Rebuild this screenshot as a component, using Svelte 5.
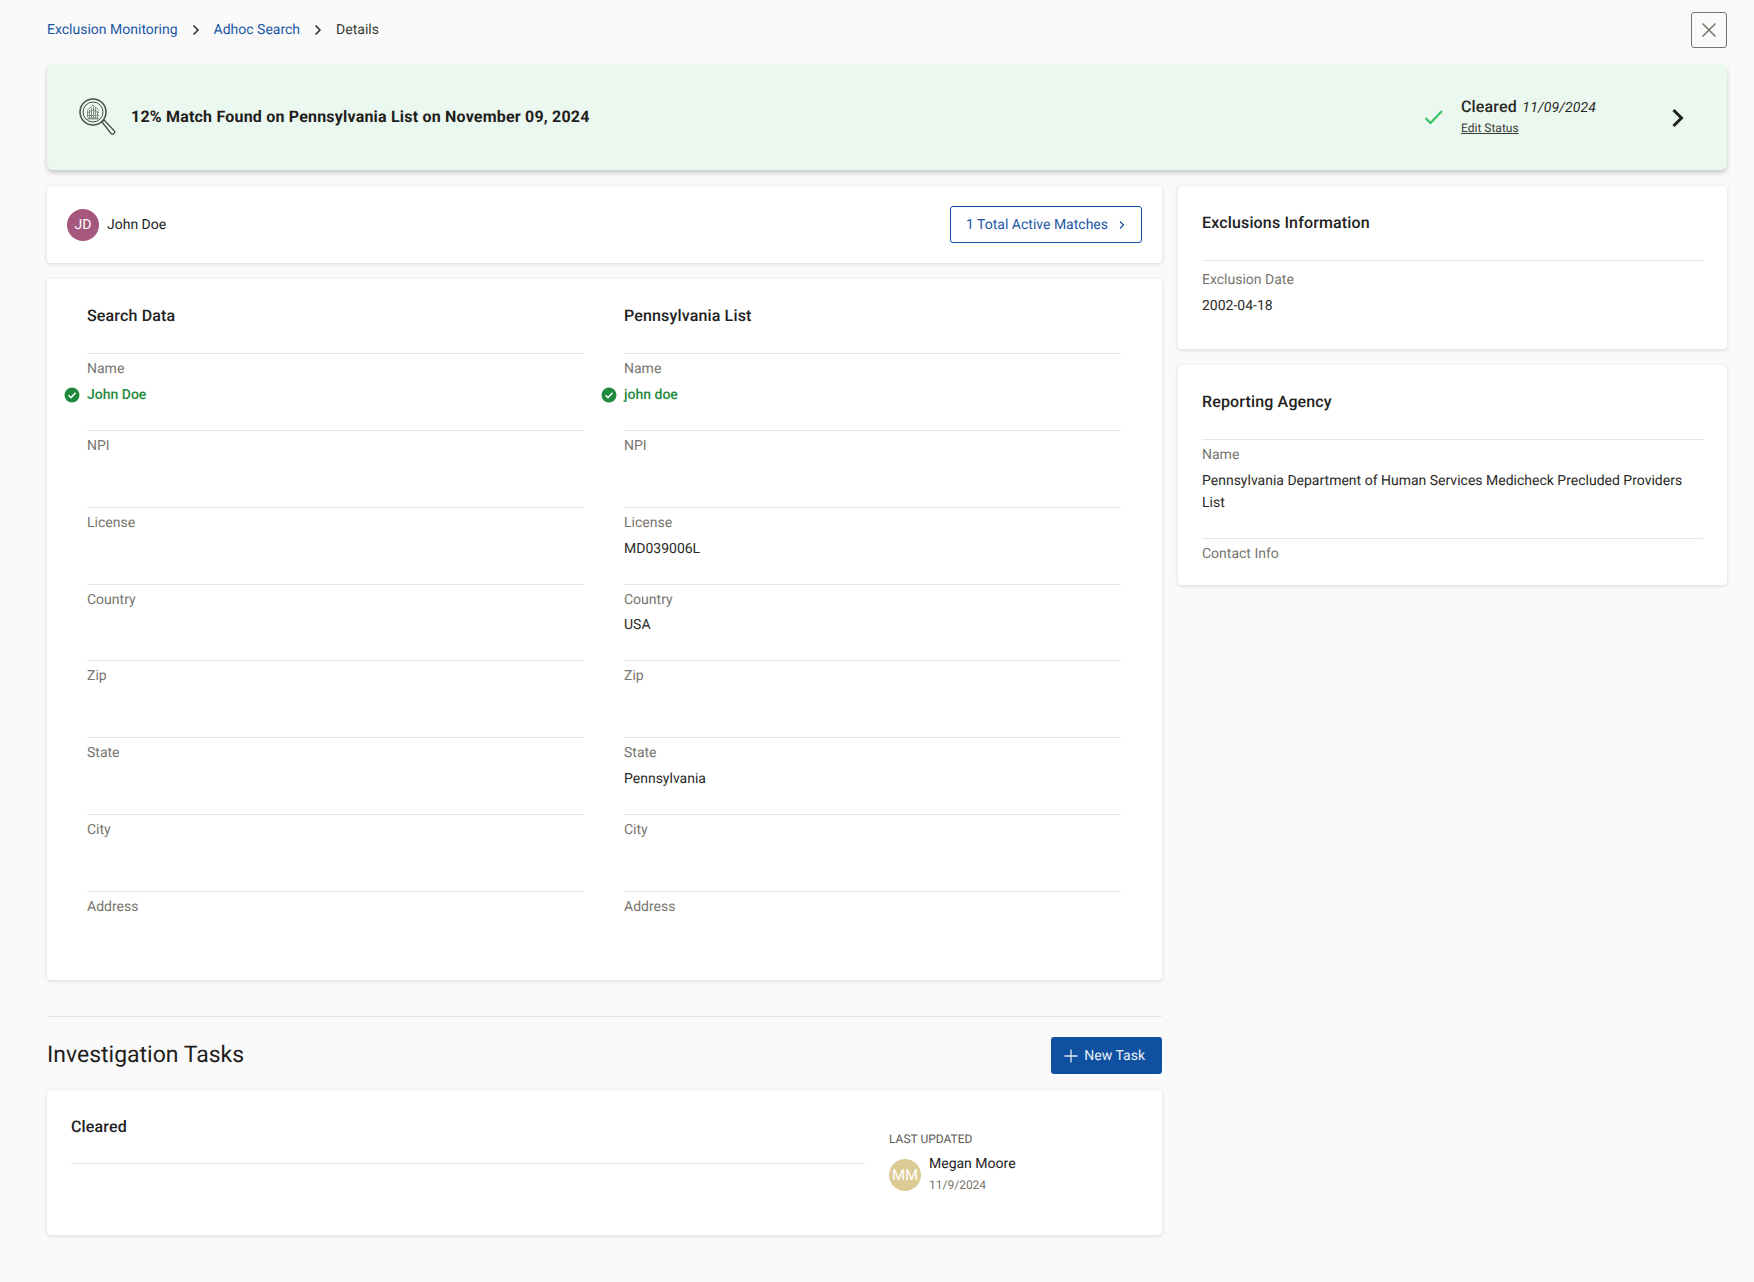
<script>
  const fields = [
    ['Name', 'John Doe', 'john doe', true],
    ['NPI', '', ''],
    ['License', '', 'MD039006L'],
    ['Country', '', 'USA'],
    ['Zip', '', ''],
    ['State', '', 'Pennsylvania'],
    ['City', '', ''],
    ['Address', '', '']
  ];
  const cols = [
    { title: 'Search Data', idx: 1 },
    { title: 'Pennsylvania List', idx: 2 }
  ];
</script>

<div class="page">
  <header class="top">
    <nav class="crumbs">
      <span class="link">Exclusion Monitoring</span>
      <svg class="sep" viewBox="0 0 10 12" width="10" height="12"><path d="M2.5 1.5 7 6l-4.5 4.5" fill="none" stroke="#2b2b28" stroke-width="1.5"/></svg>
      <span class="link">Adhoc Search</span>
      <svg class="sep" viewBox="0 0 10 12" width="10" height="12"><path d="M2.5 1.5 7 6l-4.5 4.5" fill="none" stroke="#2b2b28" stroke-width="1.5"/></svg>
      <span class="cur">Details</span>
    </nav>
    <button class="close" aria-label="Close">
      <svg viewBox="0 0 16 16" width="16" height="16"><path d="M1.5 1.5l13 13M14.5 1.5l-13 13" stroke="#77756d" stroke-width="1.5" fill="none"/></svg>
    </button>
  </header>

  <section class="banner">
    <svg class="seal" viewBox="0 0 38 38" width="38" height="38" fill="none" stroke="#4b4d4a">
      <circle cx="15" cy="14" r="13" stroke-width="1.5"/>
      <circle cx="15" cy="14" r="10" stroke-width="1"/>
      <path d="M9.500 19v-6M11.500 20v-8M13.500 20v-10M15.500 20V9M17.500 20v-10M19.500 20v-7M9 12.500l6-5.500 6 5.500M9 15l6-3 6 3M9 17.500h12" stroke-width="1" stroke="#808b86"/>
      <path d="M9.500 20.500h11" stroke-width="1.800" stroke="#808b86"/>
      <path d="M24 24l2-2 10 10.500a1.500 1.500 0 0 1-3 3z" stroke-width="1.300"/>
    </svg>
    <h1>12% Match Found on Pennsylvania List on November 09, 2024</h1>
    <svg class="tick" viewBox="0 0 20 16" width="20" height="16"><path d="M1.500 9 6.500 14 18 2" fill="none" stroke="#30c060" stroke-width="2"/></svg>
    <div class="status">
      <div class="status-line"><strong>Cleared</strong> <em>11/09/2024</em></div>
      <span class="edit">Edit Status</span>
    </div>
    <svg class="chev" viewBox="0 0 14 20" width="14" height="20"><path d="M2.500 2 10.500 10 2.500 18" fill="none" stroke="#1f201c" stroke-width="3"/></svg>
  </section>

  <div class="grid">
    <div class="main">
      <section class="card person">
        <span class="avatar jd">JD</span>
        <span class="pname">John Doe</span>
        <button class="outline">1 Total Active Matches
          <svg viewBox="0 0 8 10" width="8" height="10"><path d="M2 1.500 5.500 5 2 8.500" fill="none" stroke="#0f50a0" stroke-width="1.100"/></svg>
        </button>
      </section>

      <section class="card compare">
        {#each cols as col}
          <div class="col">
            <h2>{col.title}</h2>
            {#each fields as f}
              <div class="field">
                <div class="label">{f[0]}</div>
                <div class="value" class:match={f[3]}>
                  {#if f[3]}
                    <svg class="ok" viewBox="0 0 16 16" width="16" height="16"><circle cx="8" cy="8" r="7.500" fill="#1f8a3d"/><path d="M4.500 8.200 7 10.700 11.500 5.800" fill="none" stroke="#fff" stroke-width="1.600"/></svg>
                  {/if}
                  {f[col.idx]}
                </div>
              </div>
            {/each}
          </div>
        {/each}
      </section>

      <div class="tasks-head">
        <h3>Investigation Tasks</h3>
        <button class="primary">
          <svg viewBox="0 0 14 14" width="14" height="14"><path d="M7 .5v13M.5 7h13" stroke="#dfe8f3" stroke-width="1.300"/></svg>
          New Task
        </button>
      </div>

      <section class="card task">
        <div class="task-left"><h2>Cleared</h2></div>
        <div class="task-right">
          <div class="lu">LAST UPDATED</div>
          <div class="who">
            <span class="avatar mm">MM</span>
            <div class="wtext">
              <div class="wname">Megan Moore</div>
              <div class="wdate">11/9/2024</div>
            </div>
          </div>
        </div>
      </section>
    </div>

    <aside class="side">
      <section class="card info">
        <h2>Exclusions Information</h2>
        <div class="ifield">
          <div class="label">Exclusion Date</div>
          <div class="value">2002-04-18</div>
        </div>
      </section>
      <section class="card info agency">
        <h2>Reporting Agency</h2>
        <div class="ifield">
          <div class="label">Name</div>
          <div class="value long">Pennsylvania Department of Human Services Medicheck Precluded Providers List</div>
        </div>
        <div class="ifield last">
          <div class="label">Contact Info</div>
        </div>
      </section>
    </aside>
  </div>
</div>

<style>
  :global(body) { margin: 0; background: #fafafa; }
  .page {
    box-sizing: border-box;
    width: 1754px;
    min-height: 1282px;
    padding: 12px 27px 0 47px;
    font-family: Roboto, sans-serif;
    font-size: 14px;
    color: #2a2a26;
    text-rendering: geometricPrecision;
  }
  h1, h2, h3 { margin: 0; }
  button { font-family: inherit; cursor: pointer; text-rendering: geometricPrecision; }
  .top { display: flex; justify-content: space-between; align-items: flex-start; height: 52px; }
  .crumbs { display: flex; align-items: center; height: 36px; gap: 13px; }
  .link { color: #1c57a5; }
  .cur { color: #3a3a36; }
  .close {
    width: 36px; height: 36px; padding: 0;
    display: flex; align-items: center; justify-content: center;
    background: transparent; border: 1px solid #77756d; border-radius: 3px;
  }
  .banner {
    display: flex; align-items: center;
    height: 106px; box-sizing: border-box;
    padding: 0 42px 0 31px;
    background: #ebf8ef; border-radius: 6px;
    box-shadow: 0 3px 5px rgba(0,0,0,.2);
  }
  .banner .seal { margin-right: 15px; flex: none; }
  .banner h1 { font-size: 16px; font-weight: 700; color: #1f201c; flex: 1; letter-spacing: .2px; margin-top: -1px; }
  .tick { margin-right: 17px; }
  .status { width: 210px; margin-top: -2px; }
  .status-line { font-size: 14px; line-height: 20px; }
  .status-line strong { font-size: 16px; font-weight: 500; letter-spacing: .15px; }
  .status-line em { margin-left: 2px; letter-spacing: .15px; }
  .edit { display: block; font-size: 12px; line-height: 14px; margin-top: 3px; text-decoration: underline; color: #3a3a36; }
  .chev { flex: none; margin-top: 2px; }
  .grid { display: grid; grid-template-columns: 1115px 549px; gap: 16px; margin-top: 16px; align-items: start; }
  .main, .side { display: flex; flex-direction: column; gap: 16px; }
  .card { background: #fff; border-radius: 4px; box-shadow: 0 1px 4px rgba(0,0,0,.14); box-sizing: border-box; }
  .person { display: flex; align-items: center; height: 77px; padding: 0 20px; }
  .avatar {
    width: 32px; height: 32px; border-radius: 50%; color: #fff;
    display: flex; align-items: center; justify-content: center; font-size: 14px; flex: none;
  }
  .jd { background: #a6577e; }
  .mm { background: #dccb94; font-size: 15px; }
  .pname { margin-left: 8px; flex: 1; color: #22221e; margin-top: 1px; }
  .outline {
    display: flex; align-items: center; gap: 10px;
    height: 37px; padding: 1px 15px 0; background: #fff; box-sizing: border-box;
    border: 1px solid #0f50a0; border-radius: 3px; color: #1c57a5; font-size: 14px;
  }
  .compare { display: grid; grid-template-columns: 497px 497px; gap: 40px; height: 701px; padding: 0 41px 0 40px; }
  .col h2 { height: 74px; padding-top: 26px; box-sizing: border-box; font-size: 16px; font-weight: 500; color: #22221e; line-height: 22px; letter-spacing: .15px; }
  .field { box-sizing: border-box; height: 77px; border-top: 1px solid #e6e6e4; padding-top: 5px; }
  .field:nth-of-type(4) { height: 76px; }
  .field:nth-of-type(4) .value { margin-top: 5px; }
  .label { color: #77756d; line-height: 20px; }
  .value { position: relative; color: #2a2a26; line-height: 20px; margin-top: 6px; min-height: 20px; }
  .value.match { color: #1f8a3d; font-weight: 500; }
  .ok { position: absolute; left: -23px; top: 2px; }
  .tasks-head {
    display: flex; justify-content: space-between; align-items: center;
    border-top: 1px solid #e6e6e4;
    margin-top: 20px; padding-top: 20px;
    height: 37px;
  }
  .tasks-head h3 { font-size: 23px; font-weight: 400; color: #1f201c; margin-top: -2px; }
  .primary {
    display: flex; align-items: center; gap: 6px;
    height: 37px; padding: 0 17px 0 13px; box-sizing: border-box;
    background: #0f50a0; color: #eaf0f8; border: 0; border-radius: 3px; font-size: 14px;
  }
  .task { display: flex; height: 145px; padding: 0 24px; }
  .task-left { width: 794px; height: 74px; box-sizing: border-box; border-bottom: 1px solid #e6e6e4; padding-top: 26px; }
  .task-left h2 { font-size: 16px; font-weight: 500; color: #22221e; line-height: 22px; letter-spacing: .15px; }
  .task-right { margin-left: 24px; padding-top: 41px; }
  .lu { font-size: 12px; color: #5c5b54; line-height: 16px; }
  .who { display: flex; gap: 8px; margin-top: 9px; align-items: center; }
  .wtext { margin-top: -2px; }
  .wname { color: #22221e; line-height: 20px; }
  .wdate { font-size: 12px; color: #77756d; line-height: 18px; margin-top: 2px; }
  .info { padding: 0 24px; height: 163px; }
  .agency { height: 220px; }
  .info h2 { height: 75px; padding-top: 26px; box-sizing: border-box; font-size: 16px; font-weight: 500; color: #22221e; line-height: 22px; letter-spacing: .15px; border-bottom: 1px solid #e6e6e4; }
  .ifield { padding-top: 9px; }
  .agency .ifield { padding-top: 5px; }
  .agency .ifield.last { border-top: 1px solid #e6e6e4; margin-top: 24px; padding-top: 5px; }
  .value.long { line-height: 22px; margin-top: 5px; }
</style>
